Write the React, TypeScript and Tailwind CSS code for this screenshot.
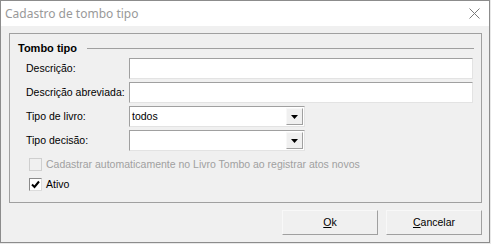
import React from 'react';

const font = { fontFamily: '"Liberation Sans", Arial, sans-serif' };

const TextBox: React.FC<{ value?: string }> = ({ value }) => (
  <div className="flex h-[21px] w-[344px] shrink-0 items-center border border-t-[#a0a0a0] border-l-[#a0a0a0] border-b-[#e3e3e3] border-r-[#e3e3e3] bg-white pl-[2px] text-[10.5px] text-black">
    {value}
  </div>
);

const Combo: React.FC<{ value?: string }> = ({ value }) => (
  <div className="flex h-[21px] w-[176px] shrink-0 items-center justify-between border border-t-[#a0a0a0] border-l-[#a0a0a0] border-b-[#e3e3e3] border-r-[#e3e3e3] bg-white pl-[2px] pr-[1px] text-[10.5px] text-black">
    <span>{value}</span>
    <div className="flex h-[17px] w-[17px] items-center justify-center border border-t-[#f8f8f8] border-l-[#f8f8f8] border-b-[#a0a0a0] border-r-[#a0a0a0] bg-[#f0f0f0]">
      <svg width="7" height="4" viewBox="0 0 7 4">
        <polygon points="0,0 7,0 3.5,4" fill="#000" />
      </svg>
    </div>
  </div>
);

const Row: React.FC<{ label: string; children: React.ReactNode }> = ({ label, children }) => (
  <div className="flex h-[21px] items-center">
    <span className="w-[119px] shrink-0 pl-[16px] text-[10.5px] text-black whitespace-nowrap">{label}</span>
    {children}
  </div>
);

const Check: React.FC<{ label: string; checked?: boolean; disabled?: boolean }> = ({ label, checked, disabled }) => (
  <div className="flex h-[13px] items-center gap-[4px] pl-[19px]">
    <div
      className={
        disabled
          ? 'h-[13px] w-[13px] shrink-0 border border-[#cfcfcf] bg-[#f0f0f0]'
          : 'flex h-[13px] w-[13px] shrink-0 items-center justify-center border border-t-[#8a8a8a] border-l-[#8a8a8a] border-b-[#dcdcdc] border-r-[#dcdcdc] bg-white'
      }
    >
      {checked && (
        <svg width="9" height="9" viewBox="0 0 9 9">
          <path d="M1 4.5 L3.5 7 L8 1.5" stroke="#000" strokeWidth="2" fill="none" />
        </svg>
      )}
    </div>
    <span className={disabled ? 'text-[10.5px] leading-[13px] text-[#a0a0a0]' : 'text-[10.5px] leading-[13px] text-black'}>
      {label}
    </span>
  </div>
);

const Button: React.FC<{ hot: string; rest: string }> = ({ hot, rest }) => (
  <button className="flex h-[25px] w-[96px] items-center justify-center border border-t-[#f8f8f8] border-l-[#f8f8f8] border-b-[#a0a0a0] border-r-[#a0a0a0] bg-[#f0f0f0] text-[10.5px] text-black">
    <span>
      <span className="underline">{hot}</span>
      {rest}
    </span>
  </button>
);

export default function App() {
  return (
    <div className="h-[244px] w-[491px] bg-[#e8e8e8]" style={font}>
      <div className="flex h-[243px] w-[490px] flex-col border border-[#8c8c8c] bg-[#f0f0f0]">
        <div className="flex h-[25px] items-center justify-between bg-white pl-[4px] pr-[9px]">
          <span className="text-[12px] text-[#999999]" style={{ fontFamily: '"Noto Sans", "Open Sans", sans-serif' }}>
            Cadastro de tombo tipo
          </span>
          <svg width="11" height="11" viewBox="0 0 11 11">
            <path d="M0.5 0.5 L10.5 10.5 M10.5 0.5 L0.5 10.5" stroke="#7a7a7a" strokeWidth="1" />
          </svg>
        </div>

        <div className="ml-[8px] mt-[7px] flex h-[170px] w-[473px] flex-col border border-[#a0a0a0]">
          <div className="mt-[8px] flex h-[13px] items-center pl-[8px] pr-[7px]">
            <span className="text-[11px] font-bold text-black">Tombo tipo</span>
            <div className="ml-[10px] h-px flex-1 bg-[#a0a0a0]" />
          </div>

          <div className="mt-[3px] flex flex-col gap-[3px]">
            <Row label="Descrição:">
              <TextBox />
            </Row>
            <Row label="Descrição abreviada:">
              <TextBox />
            </Row>
            <Row label="Tipo de livro:">
              <Combo value="todos" />
            </Row>
            <Row label="Tipo decisão:">
              <Combo />
            </Row>
          </div>

          <div className="mt-[7px] flex flex-col gap-[7px]">
            <Check label="Cadastrar automaticamente no Livro Tombo ao registrar atos novos" disabled />
            <Check label="Ativo" checked />
          </div>
        </div>

        <div className="mt-[7px] flex justify-end gap-[8px] pr-[7px]">
          <Button hot="O" rest="k" />
          <Button hot="C" rest="ancelar" />
        </div>
      </div>
    </div>
  );
}
